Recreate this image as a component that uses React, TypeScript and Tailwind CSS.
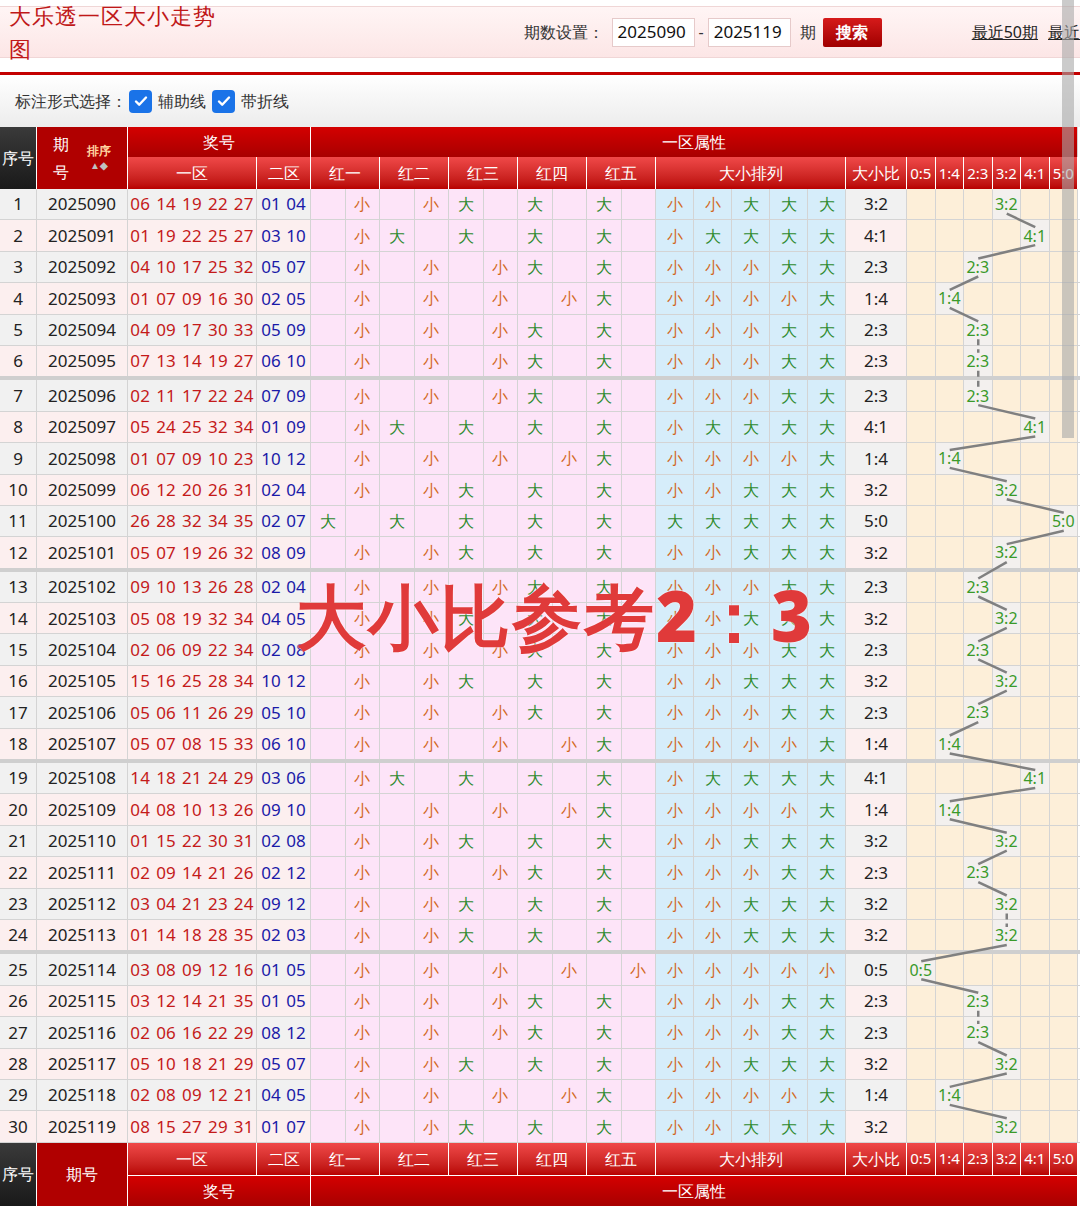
const rows: [string, string, string][] = [
  ["2025090", "06 14 19 22 27", "01 04"],
  ["2025091", "01 19 22 25 27", "03 10"],
  ["2025092", "04 10 17 25 32", "05 07"],
  ["2025093", "01 07 09 16 30", "02 05"],
  ["2025094", "04 09 17 30 33", "05 09"],
  ["2025095", "07 13 14 19 27", "06 10"],
  ["2025096", "02 11 17 22 24", "07 09"],
  ["2025097", "05 24 25 32 34", "01 09"],
  ["2025098", "01 07 09 10 23", "10 12"],
  ["2025099", "06 12 20 26 31", "02 04"],
  ["2025100", "26 28 32 34 35", "02 07"],
  ["2025101", "05 07 19 26 32", "08 09"],
  ["2025102", "09 10 13 26 28", "02 04"],
  ["2025103", "05 08 19 32 34", "04 05"],
  ["2025104", "02 06 09 22 34", "02 08"],
  ["2025105", "15 16 25 28 34", "10 12"],
  ["2025106", "05 06 11 26 29", "05 10"],
  ["2025107", "05 07 08 15 33", "06 10"],
  ["2025108", "14 18 21 24 29", "03 06"],
  ["2025109", "04 08 10 13 26", "09 10"],
  ["2025110", "01 15 22 30 31", "02 08"],
  ["2025111", "02 09 14 21 26", "02 12"],
  ["2025112", "03 04 21 23 24", "09 12"],
  ["2025113", "01 14 18 28 35", "02 03"],
  ["2025114", "03 08 09 12 16", "01 05"],
  ["2025115", "03 12 14 21 35", "01 05"],
  ["2025116", "02 06 16 22 29", "08 12"],
  ["2025117", "05 10 18 21 29", "05 07"],
  ["2025118", "02 08 09 12 21", "04 05"],
  ["2025119", "08 15 27 29 31", "01 07"],
];

const RATIOS = ["0:5", "1:4", "2:3", "3:2", "4:1", "5:0"];
const ROW_H = 31.4;
const cols =
  "grid grid-cols-[37px_91px_129px_54px_repeat(10,34.5px)_repeat(5,38px)_61px_repeat(6,28.5px)]";

const big = (n: number) => n >= 18;

function Mark({ b }: { b: boolean }) {
  return b ? <span className="text-[#2e8b2e]">大</span> : <span className="text-[#d2691e]">小</span>;
}

const cell = "flex items-center justify-center border-r border-[#d4d4d4] overflow-hidden whitespace-nowrap";
const hd1 = "bg-gradient-to-b from-[#d40000] to-[#a80000] text-white";
const hd2 = "bg-gradient-to-b from-[#f04848] to-[#b80000] text-white";

function rowTop(i: number) {
  return i * ROW_H + Math.floor(i / 6) * 3;
}

export default function App() {
  const parsed = rows.map(([p, a, b]) => {
    const nums = a.split(" ").map(Number);
    const bigs = nums.filter(big).length;
    return { p, a, b, nums, bigs };
  });

  const pts = parsed.map((r, i) => ({
    x: 907 + r.bigs * 28.5 + 14.25,
    y: rowTop(i) + ROW_H / 2,
    k: r.bigs,
  }));

  return (
    <div className="relative w-[1080px] h-[1211px] overflow-hidden bg-white font-['Noto_Sans_CJK_SC',sans-serif] text-[16px]">
      {/* top bar */}
      <div className="h-[6px]" />
      <div className="h-[52px] flex items-center pl-[9px] border-y border-[#f0d6d6] bg-gradient-to-b from-[#fff5f5] to-[#fce6e6]">
        <div className="text-[#c01818] text-[22px] tracking-[1px]">大乐透一区大小走势图</div>
        <div className="ml-[292px] flex items-center text-[#333] text-[16px] whitespace-nowrap">
          <span>期数设置：</span>
          <span className="ml-[8px] w-[83px] h-[29px] border border-[#e6caca] bg-white flex items-center px-[5px] text-[17px] font-['Roboto',sans-serif] text-[#111]">2025090</span>
          <span className="mx-[4px]">-</span>
          <span className="w-[83px] h-[29px] border border-[#e6caca] bg-white flex items-center px-[5px] text-[17px] font-['Roboto',sans-serif] text-[#111]">2025119</span>
          <span className="ml-[9px]">期</span>
          <span className="ml-[7px] w-[59px] h-[29px] rounded-[2px] bg-gradient-to-b from-[#d61a1a] to-[#a00000] text-white font-bold flex items-center justify-center">搜索</span>
          <span className="ml-[90px] underline text-[#222]">最近50期</span>
          <span className="ml-[10px] underline text-[#222]">最近</span>
        </div>
      </div>
      <div className="h-[14px]" />
      <div className="h-[3px] bg-[#c40000]" />
      <div className="h-[52px] flex items-center px-[15px] bg-gradient-to-b from-white to-[#ececec] text-[#333] text-[16px]">
        <span>标注形式选择：</span>
        {["辅助线", "带折线"].map((t) => (
          <span key={t} className="flex items-center ml-[2px] mr-[4px]">
            <span className="w-[23px] h-[23px] rounded-[4px] bg-[#1a73e8] flex items-center justify-center mr-[6px]">
              <svg width="16" height="16" viewBox="0 0 16 16"><path d="M3 8.5l3.2 3.2L13 4.5" stroke="white" strokeWidth="2.4" fill="none" strokeLinecap="round" strokeLinejoin="round" /></svg>
            </span>
            {t}
          </span>
        ))}
      </div>

      {/* header */}
      <div className={`${cols} h-[62px] grid-rows-[30px_32px] text-[16px]`}>
        <div className={`${cell} row-span-2 bg-gradient-to-b from-[#3a3a3a] to-[#1a1a1a] text-white border-white`}>序号</div>
        <div className={`${cell} row-span-2 bg-[#b00000] text-white border-white relative`}>
          <div className="flex flex-col leading-[28px] mr-[18px]"><span>期</span><span>号</span></div>
          <div className="flex flex-col items-center text-[12px] font-bold text-[#ffd4a0] leading-[14px]">排序<span className="text-[#c0c0c0] text-[10px]">▲◆</span></div>
        </div>
        <div className={`${cell} col-span-2 ${hd1} border-white`}>奖号</div>
        <div className={`${cell} col-span-[22] ${hd1}`}>一区属性</div>
        <div className={`${cell} ${hd2} border-white`}>一区</div>
        <div className={`${cell} ${hd2} border-white`}>二区</div>
        {["红一", "红二", "红三", "红四", "红五"].map((t) => (
          <div key={t} className={`${cell} col-span-2 ${hd2} border-white`}>{t}</div>
        ))}
        <div className={`${cell} col-span-5 ${hd2} border-white`}>大小排列</div>
        <div className={`${cell} ${hd2} border-white`}>大小比</div>
        {RATIOS.map((t) => (
          <div key={t} className={`${cell} ${hd2} border-white font-['Roboto',sans-serif] text-[15px]`}>{t}</div>
        ))}
      </div>

      {/* body */}
      <div className="relative">
        {parsed.map((r, i) => {
          const odd = i % 2 === 0;
          const sep = i % 6 === 5 && i < 29;
          const base = odd ? "bg-[#f1f1f1]" : "bg-[#fcefef]";
          return (
            <div
              key={r.p}
              className={`${cols} box-border border-b ${sep ? "border-b-[4px] border-[#cfcfcf] h-[34.4px]" : "border-[#d4d4d4] h-[31.4px]"} font-['Roboto',sans-serif] text-[17px]`}
            >
              <div className={`${cell} ${base} text-[#222]`}>{i + 1}</div>
              <div className={`${cell} ${base} text-[#222]`}>{r.p}</div>
              <div className={`${cell} ${base} text-[#c41a1a] tracking-[0.2px]`}>{r.a.replace(/ /g, "\u2009\u2009")}</div>
              <div className={`${cell} ${base} text-[#1a1aa8]`}>{r.b.replace(/ /g, "\u2009\u2009")}</div>
              {r.nums.flatMap((n, j) => [
                <div key={`l${j}`} className={`${cell} bg-[#fde4f8] text-[16px]`}>{big(n) ? <Mark b /> : null}</div>,
                <div key={`r${j}`} className={`${cell} bg-[#fde4f8] text-[16px]`}>{!big(n) ? <Mark b={false} /> : null}</div>,
              ])}
              {r.nums.map((n, j) => (
                <div key={`a${j}`} className={`${cell} bg-[#d6edfa] text-[16px]`}><Mark b={big(n)} /></div>
              ))}
              <div className={`${cell} ${base} text-[#222]`}>{`${r.bigs}:${5 - r.bigs}`}</div>
              {RATIOS.map((t, k) => (
                <div key={t} className={`${cell} ${k === r.bigs ? "bg-[#f3f0ee] text-[#3a9a2a]" : "bg-[#fdefd9]"} text-[16px]`}>
                  {k === r.bigs ? t : ""}
                </div>
              ))}
            </div>
          );
        })}
        <svg className="absolute left-0 top-0 pointer-events-none" width="1080" height="954">
          {pts.slice(1).map((p, i) => {
            const q = pts[i];
            const same = p.k === q.k;
            return (
              <line
                key={i}
                x1={q.x}
                y1={q.y + 9}
                x2={p.x}
                y2={p.y - 9}
                stroke="#808080"
                strokeWidth="2.5"
                strokeDasharray={same ? "6 4" : undefined}
              />
            );
          })}
        </svg>
      </div>

      {/* footer */}
      <div className={`${cols} h-[63px] grid-rows-[32px_31px] text-[16px]`}>
        <div className={`${cell} row-span-2 bg-gradient-to-b from-[#3a3a3a] to-[#1a1a1a] text-white border-white`}>序号</div>
        <div className={`${cell} row-span-2 bg-[#b00000] text-white border-white`}>期号</div>
        <div className={`${cell} ${hd2} border-white`}>一区</div>
        <div className={`${cell} ${hd2} border-white`}>二区</div>
        {["红一", "红二", "红三", "红四", "红五"].map((t) => (
          <div key={t} className={`${cell} col-span-2 ${hd2} border-white`}>{t}</div>
        ))}
        <div className={`${cell} col-span-5 ${hd2} border-white`}>大小排列</div>
        <div className={`${cell} ${hd2} border-white`}>大小比</div>
        {RATIOS.map((t) => (
          <div key={t} className={`${cell} ${hd2} border-white font-['Roboto',sans-serif] text-[15px]`}>{t}</div>
        ))}
        <div className={`${cell} col-span-2 ${hd1} border-white border-t`}>奖号</div>
        <div className={`${cell} col-span-[22] ${hd1} border-t border-white`}>一区属性</div>
      </div>

      {/* overlays */}
      <div className="absolute left-[296px] top-[580px] text-[70px] font-black text-[#e03a3a] leading-none tracking-[2px] [text-shadow:0_0_2px_#fff]">
        大小比参考2：3
      </div>
      <div className="absolute left-[1062px] top-0 w-[12px] h-[438px] bg-[#a8a8a8]/60" />
    </div>
  );
}
